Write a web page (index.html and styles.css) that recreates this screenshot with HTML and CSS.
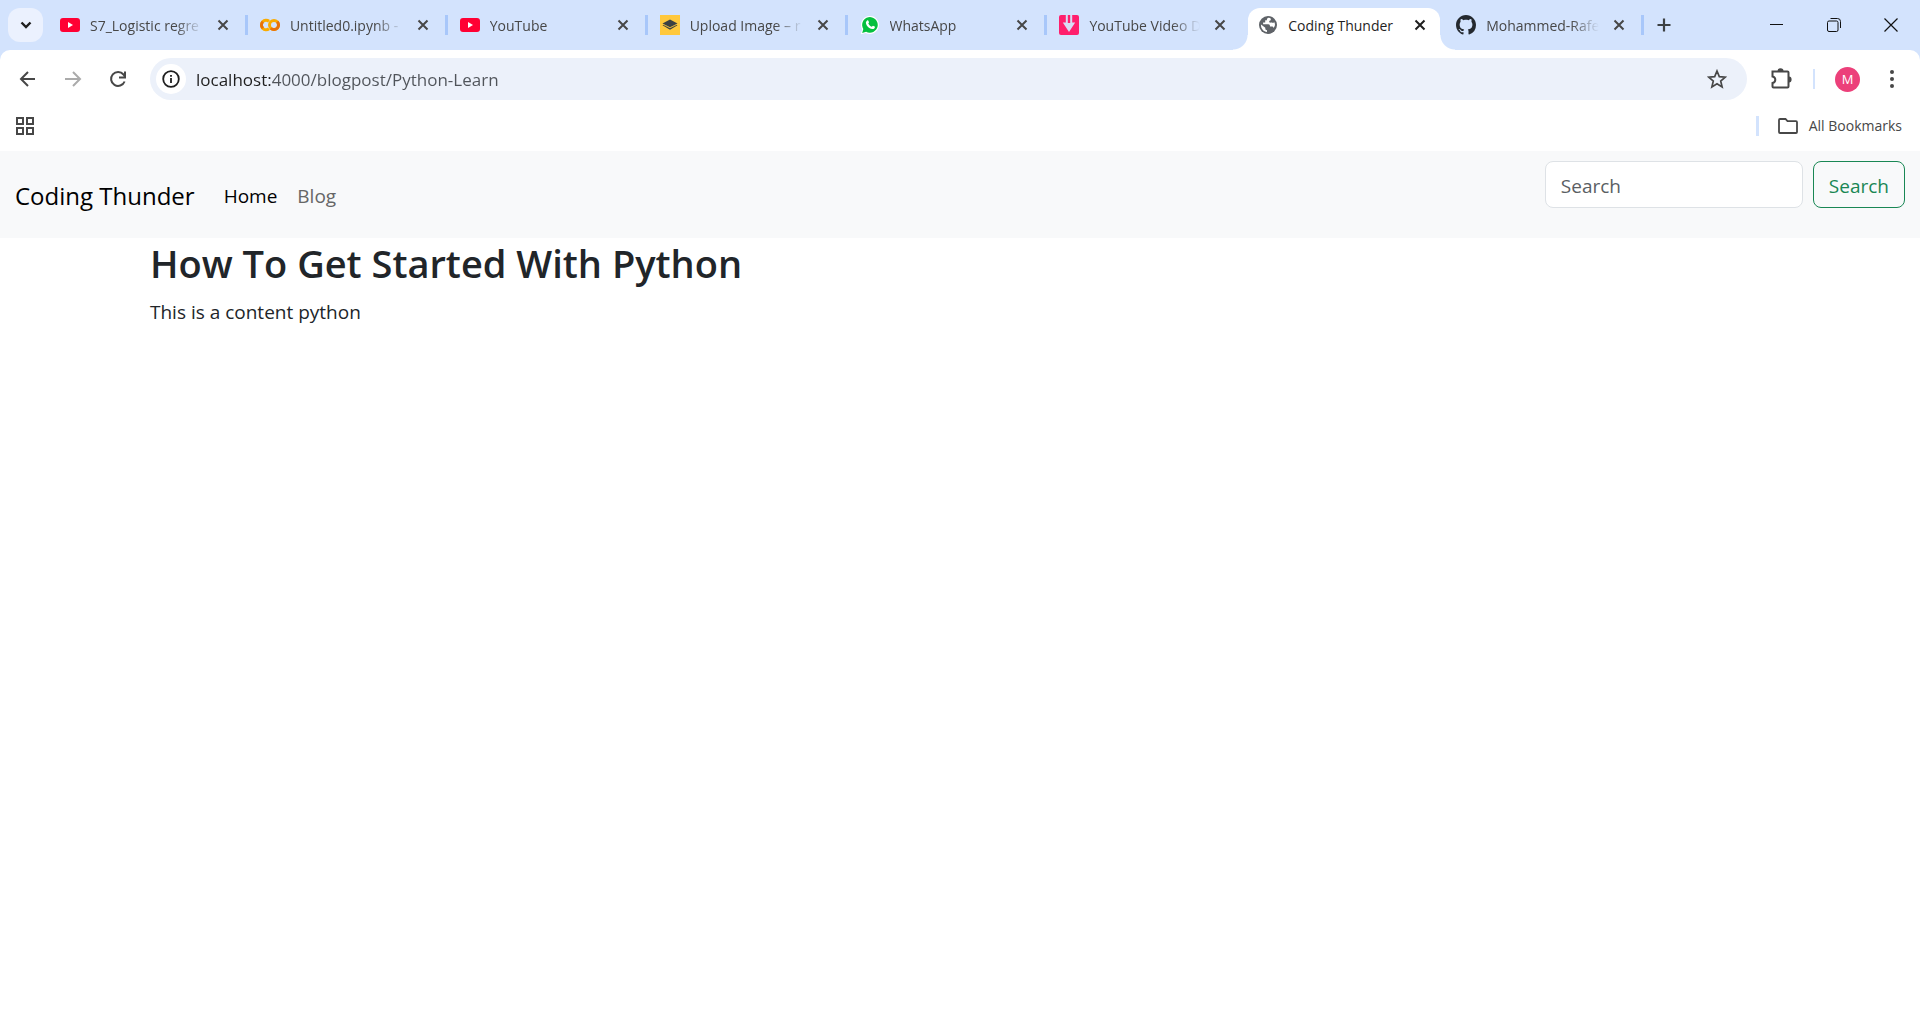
FILE: index.html
```html
<!DOCTYPE html>
<html lang="en">
<head>
<meta charset="utf-8">
<title>Coding Thunder</title>
<link rel="stylesheet" href="styles.css">
</head>
<body>
<svg class="sprite" aria-hidden="true">
  <symbol id="x" viewBox="0 0 16 16"><path d="M3.500 3.500l9 9M12.500 3.500l-9 9" fill="none" stroke="currentColor" stroke-width="2"/></symbol>
  <symbol id="yt" viewBox="0 0 20 20"><rect y="3" width="20" height="14" rx="3" fill="#ff0033"/><path d="M8 7l5 3-5 3z" fill="#fff"/></symbol>
</svg>
<header class="browser">
  <div class="tabstrip">
    <button class="tab-search" aria-label="Search tabs"><svg width="16" height="16" viewBox="0 0 16 16"><path d="M3.500 5.500L8 10l4.500-4.500" fill="none" stroke="#1f1f1f" stroke-width="2.400"/></svg></button>
    <div class="tabs">
      <div class="tab"><svg class="favicon"><use href="#yt"/></svg><span class="title">S7_Logistic regre</span><button class="close" aria-label="Close tab"><svg><use href="#x"/></svg></button></div>
      <div class="tab"><svg class="favicon" viewBox="0 0 20 20" fill="none" stroke-width="3"><path d="M9 6.300A4.700 4.700 0 1 0 9 13.700" stroke="#f9ab00"/><path d="M2.900 6.700A4.700 4.700 0 0 0 2.900 13.300" stroke="#e8710a"/><circle cx="14" cy="10" r="4.500" stroke="#f9ab00"/><path d="M10.800 13.200A4.500 4.500 0 0 0 17.200 6.800" stroke="#e8710a"/></svg><span class="title">Untitled0.ipynb -</span><button class="close" aria-label="Close tab"><svg><use href="#x"/></svg></button></div>
      <div class="tab"><svg class="favicon"><use href="#yt"/></svg><span class="title">YouTube</span><button class="close" aria-label="Close tab"><svg><use href="#x"/></svg></button></div>
      <div class="tab"><svg class="favicon" viewBox="0 0 20 20"><path d="M0 0h20v20H0z" fill="#ffc83d"/><path d="M10 4.500L17.500 8.500 10 12.300 2.500 8.500z" fill="#3c4043"/><path d="M2.500 10.300l2-.900L10 12.300l5.500-2.900 2 .900L10 14.800z" fill="#3c4043"/><path d="M3.500 9.600L10 12.800l6.500-3.200" fill="none" stroke="#ffc83d" stroke-width=".8"/></svg><span class="title">Upload Image – r</span><button class="close" aria-label="Close tab"><svg><use href="#x"/></svg></button></div>
      <div class="tab"><svg class="favicon" viewBox="0 0 20 20"><path d="M.7 19.300L2.100 14.400A9 9 0 1 1 5.700 17.900z" fill="#fff"/><path d="M2.200 17.900L3.300 14A7.800 7.800 0 1 1 6.100 16.700z" fill="#05c03f"/><path d="M7.200 5.400c.5-.4 1-.2 1.200.300l.6 1.500c.1.300-.7 1-.7 1.300.8 1.600 1.900 2.600 3.400 3.200.4 0 1-1.100 1.300-1l1.700.8c.4.300.2 1.300-.2 1.700-1.400 1.500-3.500.8-5.200-.3C7.600 11.800 6 9.800 5.900 8c-.1-1 .5-2 1.300-2.600z" fill="#fff"/></svg><span class="title">WhatsApp</span><button class="close" aria-label="Close tab"><svg><use href="#x"/></svg></button></div>
      <div class="tab last"><svg class="favicon" viewBox="0 0 20 20"><rect width="20" height="20" rx="2" fill="#ff1f6d"/><path d="M6.800 0h2v8h2.400V0h2v7.500h3L10 17 3.800 7.500h3z" fill="#d9dcf5"/></svg><span class="title">YouTube Video D</span><button class="close" aria-label="Close tab"><svg><use href="#x"/></svg></button></div>
      <div class="tab active"><svg class="favicon" viewBox="0 0 20 20"><circle cx="9" cy="10" r="9" fill="#5f6368"/><path d="M9.300 2.700c-1.300.7-1.600 1.400-1.300 2.600H6.200v2.200H4.100v1.700h5.200c1.200 0 1.700.9 1.700 2.300h1.700c1 0 1.600.5 1.900 1.400A7.100 7.100 0 0 0 16 10c0-1.100-.3-2-.6-2.800-1 .9-2.600.8-3.200.1-.6.600-1.700.5-2-.4-.1-1 .5-1.500 1.500-1.700.3-.8.1-1.600-.5-2.300zM2 9.600c-.3 3.800 2.500 7 6 7.300v-1.600c-1 0-1.700-.8-1.700-1.700v-.9z" fill="#fff"/></svg><span class="title">Coding Thunder</span><button class="close" aria-label="Close tab"><svg><use href="#x"/></svg></button></div>
      <div class="tab"><svg class="favicon" viewBox="0 0 16 16"><path fill="#24292f" d="M8 0C3.580 0 0 3.580 0 8c0 3.540 2.290 6.530 5.470 7.590.4.070.55-.17.55-.38 0-.19-.01-.82-.01-1.490-2.010.37-2.530-.49-2.690-.94-.09-.23-.48-.94-.82-1.130-.28-.15-.68-.52-.01-.53.63-.01 1.080.58 1.230.82.72 1.210 1.870.87 2.330.66.070-.52.28-.87.51-1.070-1.780-.2-3.640-.89-3.640-3.950 0-.87.31-1.590.82-2.150-.08-.2-.36-1.020.08-2.120 0 0 .67-.21 2.200.82.64-.18 1.320-.27 2-.27s1.360.09 2 .27c1.530-1.040 2.200-.82 2.200-.82.44 1.100.16 1.920.08 2.120.51.56.82 1.270.82 2.150 0 3.070-1.870 3.750-3.650 3.950.29.25.54.73.54 1.480 0 1.070-.01 1.930-.01 2.200 0 .21.15.46.55.38A8.010 8.010 0 0 0 16 8c0-4.420-3.580-8-8-8z"/></svg><span class="title">Mohammed-Rafe</span><button class="close" aria-label="Close tab"><svg><use href="#x"/></svg></button></div>
    </div>
    <button class="new-tab" aria-label="New tab"><svg width="16" height="16" viewBox="0 0 16 16"><path d="M8 1.500v13M1.500 8h13" stroke="#3c4043" stroke-width="2.200"/></svg></button>
    <div class="window-controls">
      <button aria-label="Minimize"><svg width="14" height="14" viewBox="0 0 14 14"><path d="M0 6.500h13" stroke="#111" /></svg></button>
      <button aria-label="Restore"><svg width="14" height="14" viewBox="0 0 14 14" fill="none" stroke="#111"><rect x=".5" y="3" width="10.500" height="10.500" rx="1.500"/><path d="M3.500.5h7a3 3 0 0 1 3 3V10"/></svg></button>
      <button aria-label="Close window"><svg width="14" height="14" viewBox="0 0 14 14"><path d="M.5.5l13 13M13.500.5l-13 13" stroke="#111" stroke-width="1.200"/></svg></button>
    </div>
  </div>
  <div class="chrome">
    <div class="toolbar">
      <div class="history">
        <button aria-label="Back"><svg width="20" height="20" viewBox="0 0 20 20" fill="none" stroke="#474747" stroke-width="2"><path d="M17 10H3.500M10 3l-7 7 7 7"/></svg></button>
        <button aria-label="Forward" disabled><svg width="20" height="20" viewBox="0 0 20 20" fill="none" stroke="#ababab" stroke-width="2"><path d="M2 10h14.500M10 3l7 7-7 7"/></svg></button>
        <button aria-label="Reload"><svg width="20" height="20" viewBox="0 0 20 20" fill="none" stroke="#474747" stroke-width="2"><path d="M16.600 12.500A7 7 0 1 1 15.500 5.500L17 7.300M17 2.500v6h-6"/></svg></button>
      </div>
      <div class="omnibox">
        <button class="site-info" aria-label="Site information"><svg width="20" height="20" viewBox="0 0 20 20"><circle cx="10" cy="10" r="7.800" fill="none" stroke="#1f1f1f" stroke-width="1.800"/><path d="M10 9v5M10 6v1.800" stroke="#1f1f1f" stroke-width="1.800"/></svg></button>
        <input class="url" type="text" aria-label="Address" value="localhost:4000/blogpost/Python-Learn">
        <button class="star" aria-label="Bookmark this page"><svg width="20" height="20" viewBox="0 0 20 20"><path d="M10 2l2.300 5.600 6 .5-4.600 3.900 1.400 5.900-5.100-3.200-5.100 3.200 1.400-5.900L1.700 8.100l6-.5z" fill="none" stroke="#474747" stroke-width="1.700"/></svg></button>
      </div>
      <button class="extensions" aria-label="Extensions"><svg width="22" height="22" viewBox="0 0 22 22"><path d="M2.500 3.500h15q1 0 1 1v14q0 1-1 1h-14q-1 0-1-1V15q2.800-.6 2.800-3.200T2.500 8.500z" fill="none" stroke="#474747" stroke-width="2"/><path d="M7.500 3a3 2.800 0 0 1 6 0zM19 8.500a2.600 3 0 0 1 0 6z" fill="#474747"/></svg></button>
      <span class="divider"></span>
      <button class="avatar" aria-label="Profile">M</button>
      <button class="menu" aria-label="Menu"><svg width="6" height="20" viewBox="0 0 6 20" fill="#474747"><circle cx="3" cy="3" r="2"/><circle cx="3" cy="10" r="2"/><circle cx="3" cy="17" r="2"/></svg></button>
    </div>
    <div class="bookmarks">
      <button class="apps" aria-label="Apps"><svg width="18" height="18" viewBox="0 0 18 18" fill="none" stroke="#474747" stroke-width="2"><path d="M1 1h6v6H1zM11 1h6v6h-6zM1 11h6v6H1zM11 11h6v6h-6z"/></svg></button>
      <span class="bar"></span>
      <button class="all-bookmarks"><svg width="20" height="16" viewBox="0 0 20 16"><path d="M1 2q0-1 1-1h5.500l2 2.200H18q1 0 1 1V14q0 1-1 1H2q-1 0-1-1z" fill="none" stroke="#474747" stroke-width="1.800"/></svg>All Bookmarks</button>
    </div>
  </div>
</header>
<nav class="navbar">
  <a class="brand" href="#">Coding Thunder</a>
  <a class="nav-link current" href="#">Home</a>
  <a class="nav-link" href="#">Blog</a>
  <form class="search">
    <input type="search" placeholder="Search" aria-label="Search">
    <button type="button">Search</button>
  </form>
</nav>
<main class="container">
  <h1>How To Get Started With Python</h1>
  <p>This is a content python</p>
</main>
</body>
</html>
```
FILE: styles.css
```css
* { box-sizing: border-box; }
body {
  margin: 0;
  background: #fff;
  color: #212529;
  font: 19px/30px "Open Sans", "Noto Sans", sans-serif;
}
button, input { font: inherit; color: inherit; }
button {
  display: flex;
  align-items: center;
  justify-content: center;
  padding: 0;
  border: 0;
  background: none;
}
svg { display: block; flex: none; }
.sprite { position: absolute; width: 0; height: 0; }

/* Tab strip */
.browser { background: #d3e3fd; }
.tabstrip { display: flex; align-items: center; height: 50px; }
.tab-search {
  flex: none;
  width: 35px;
  height: 34px;
  margin: 0 5px 0 8px;
  border-radius: 12px;
  background: #ebf1fe;
}
.tabs { display: flex; flex: 0 1 1596px; min-width: 0; height: 50px; }
.tab {
  display: flex;
  align-items: center;
  flex: 0 1 200px;
  min-width: 0;
  padding: 0 14px 0 12px;
  border-right: 3px solid transparent;
  border-image: linear-gradient(transparent 15px, #a8c7fa 15px, #a8c7fa 35px, transparent 35px) 0 3 0 0;
  color: #474747;
  font-size: 14px;
}
.tab.last { border-image: none; padding-right: 16px; }
.favicon { width: 20px; height: 20px; margin-right: 10px; }
.title {
  flex: 1;
  min-width: 0;
  margin-right: 12px;
  padding-top: 2px;
  overflow: hidden;
  white-space: nowrap;
  mask-image: linear-gradient(90deg, #000 calc(100% - 28px), transparent);
}
.close { flex: none; width: 16px; height: 16px; }
.close svg { width: 16px; height: 16px; }
.tab.active {
  position: relative;
  flex: 0 1 192px;
  height: 42px;
  margin: 8px 4px 0 1px;
  padding: 0 12px 8px 11px;
  border-right: 0;
  border-image: none;
  border-radius: 12px 12px 0 0;
  background: #fff;
  color: #1f1f1f;
}
.active .favicon { margin-right: 9px; }
.active .title { mask-image: none; }
.tab.active::before, .tab.active::after {
  content: "";
  position: absolute;
  bottom: 0;
  width: 15px;
  height: 15px;
}
.tab.active::before { right: 100%; background: radial-gradient(circle at 0 0, transparent 14px, #fff 15px); }
.tab.active::after { left: 100%; background: radial-gradient(circle at 100% 0, transparent 14px, #fff 15px); }
.new-tab { flex: none; width: 40px; height: 40px; }
.window-controls { display: flex; margin: 0 1px 0 auto; }
.window-controls button { width: 57px; height: 50px; }

/* Toolbar */
.chrome { background: #fff; border-radius: 10px 10px 0 0; }
.toolbar { display: flex; align-items: center; height: 50px; padding: 8px 15px 0 5px; }
.history { display: flex; }
.history button { width: 45px; height: 42px; }
.omnibox {
  display: flex;
  align-items: center;
  flex: 1;
  height: 42px;
  margin: 0 20px 0 10px;
  padding: 0 20px 0 6px;
  border-radius: 21px;
  background: #ecf1fa;
}
.site-info { width: 30px; height: 30px; border-radius: 50%; background: #fff; }
.url {
  flex: 1;
  min-width: 0;
  margin-left: 10px;
  padding: 2px 0 0;
  border: 0;
  outline: 0;
  background: linear-gradient(90deg, #1f1f1f 75px, #50545a 75px);
  background-clip: text;
  color: transparent;
  font-size: 17px;
}
.extensions { width: 28px; }
.divider { width: 2px; height: 20px; margin: 0 20px 0 18px; background: #d3e3fd; }
.avatar {
  width: 25px;
  height: 25px;
  border-radius: 50%;
  background: #ec407a;
  color: #fff;
  font-size: 13px;
}
.menu { width: 26px; margin-left: 19px; }

/* Bookmarks bar */
.bookmarks { display: flex; align-items: center; height: 51px; padding: 0 18px 0 16px; }
.bar { width: 3px; height: 20px; margin: 0 19px 0 auto; background: #d3e3fd; }
.all-bookmarks { gap: 11px; color: #474747; font-size: 14px; }

/* Site */
.navbar { display: flex; align-items: center; padding: 10px 15px; background: #f8f9fa; }
.navbar a { padding-top: 2px; text-decoration: none; }
.brand { margin-right: 29px; color: #000; font-size: 24px; }
.nav-link { margin-right: 20px; color: #666; }
.nav-link.current { color: #000; }
.search { display: flex; gap: 10px; margin: 0 0 20px auto; }
.search input {
  width: 258px;
  height: 47px;
  padding: 2px 15px 0;
  border: 1px solid #dee2e6;
  border-radius: 8px;
  background: #fff;
}
.search input::placeholder { color: #5a5e63; opacity: 1; }
.search button {
  height: 47px;
  padding: 2px 15px 0;
  border: 1px solid #198754;
  border-radius: 8px;
  color: #198754;
}
.container { max-width: 1650px; margin: 0 auto; padding: 0 15px; }
h1 { margin: 0 0 9px; font-size: 38px; font-weight: 600; line-height: 50px; }
p { margin: 0 0 20px; }
```
